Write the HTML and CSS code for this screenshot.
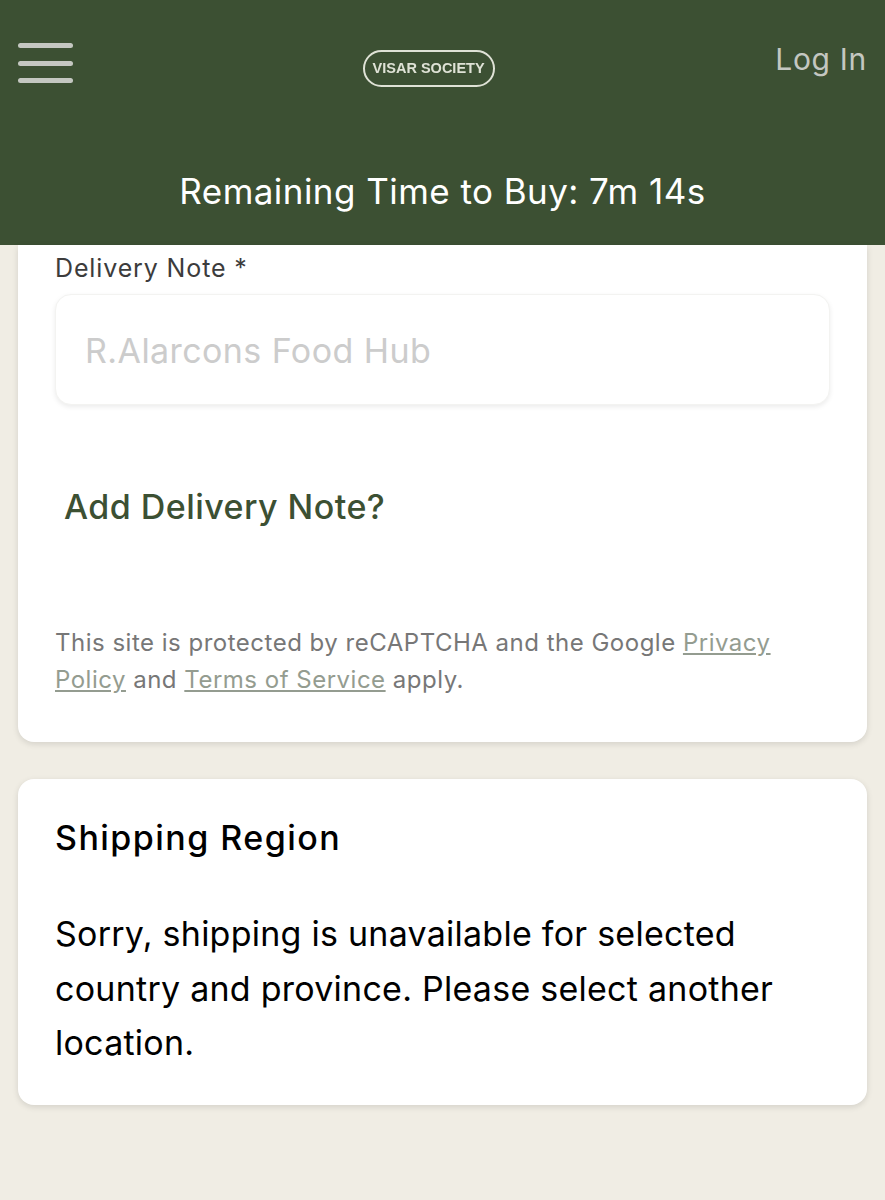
FILE: index.html
```html
<!DOCTYPE html>
<html lang="en">
<head>
  <meta charset="UTF-8" />
  <meta name="viewport" content="width=device-width, initial-scale=1.0"/>
  <title>Checkout</title>
  <link rel="stylesheet" href="styles.css">
</head>
<body>
  <header class="header">
    <div class="nav">
      <div class="burger">
        <span></span>
        <span></span>
        <span></span>
      </div>
      <div class="logo">VISAR SOCIETY</div>
      <a class="login">Log In</a>
    </div>
    <div class="timer">Remaining Time to Buy: 7m 14s</div>
  </header>

  <section class="card card-form">
    <label class="field-label" for="note">Delivery Note *</label>
    <input class="field-input" id="note" type="text" placeholder="R.Alarcons Food Hub" />
    <a class="add-note">Add Delivery Note?</a>
    <p class="legal">This site is protected by reCAPTCHA and the Google <a>Privacy Policy</a> and <a>Terms of Service</a> apply.</p>
  </section>

  <section class="card card-shipping">
    <h2>Shipping Region</h2>
    <p>Sorry, shipping is unavailable for selected country and province. Please select another location.</p>
  </section>
</body>
</html>
```

FILE: styles.css
```css
body {
  font-family: Inter, "Liberation Sans", sans-serif;
  background-color: #f0ede4;
  margin: 0;
  padding: 0;
  height: 1200px;
  overflow: hidden;
}
.header {
  background-color: #3c5033;
  height: 245px;
  box-sizing: border-box;
  padding: 43px 18px 0;
}
.nav {
  display: flex;
  justify-content: space-between;
  align-items: flex-start;
  height: 126px;
}
.burger {
  width: 55px;
  display: flex;
  flex-direction: column;
  gap: 12.5px;
}
.burger span {
  display: block;
  height: 5px;
  border-radius: 2.5px;
  background-color: #c4c7c1;
}
.logo {
  box-sizing: border-box;
  width: 132px;
  height: 37px;
  margin: 7px 0 0 9px;
  border: 2px solid #dfe2d6;
  border-radius: 19px;
  color: #dfe2d6;
  font-family: "Liberation Sans", sans-serif;
  font-size: 14.5px;
  font-weight: bold;
  line-height: 32px;
  text-align: center;
  white-space: nowrap;
  filter: blur(0.4px);
}
.login {
  color: #c4c7c1;
  font-size: 30px;
  letter-spacing: 0.7px;
  line-height: 33px;
}
.timer {
  color: white;
  font-size: 35px;
  letter-spacing: 0.45px;
  line-height: 44px;
  text-align: center;
}
.card {
  background: white;
  margin: 0 18px;
  border-radius: 0 0 16px 16px;
  box-shadow: 0 2px 6px rgba(0,0,0,0.12);
  padding: 0 37px;
}
.card-form {
  height: 497px;
  box-sizing: border-box;
  padding-top: 6px;
}
.field-label {
  display: block;
  color: #3c3c3c;
  font-size: 25px;
  letter-spacing: 0.87px;
  line-height: 34px;
}
.field-input {
  display: block;
  box-sizing: border-box;
  width: 775px;
  height: 111px;
  margin-top: 9px;
  padding: 2px 29px 0;
  border: 1px solid #f3f3f1;
  border-radius: 16px;
  box-shadow: 0 2px 5px rgba(0,0,0,0.08);
  font-family: inherit;
  font-size: 34px;
  letter-spacing: 0.42px;
  outline: none;
}
.field-input::placeholder {
  color: #cccccc;
}
.add-note {
  display: block;
  margin: 80px 0 0 9px;
  color: #3c5033;
  font-size: 34px;
  font-weight: 500;
  letter-spacing: 0.45px;
  line-height: 44px;
}
.legal {
  margin: 95px 0 0;
  color: #777777;
  font-size: 24px;
  letter-spacing: 0.5px;
  line-height: 37px;
}
.legal a {
  color: #949c90;
  text-decoration: underline;
}
.card-shipping {
  margin-top: 37px;
  height: 326px;
  box-sizing: border-box;
  border-radius: 16px;
  padding-top: 37px;
  color: black;
}
.card-shipping h2 {
  margin: 0;
  font-size: 34px;
  font-weight: 500;
  letter-spacing: 1.45px;
  line-height: 44px;
}
.card-shipping p {
  margin: 47px 0 0;
  font-size: 34px;
  letter-spacing: 0.25px;
  line-height: 54.5px;
}
```
